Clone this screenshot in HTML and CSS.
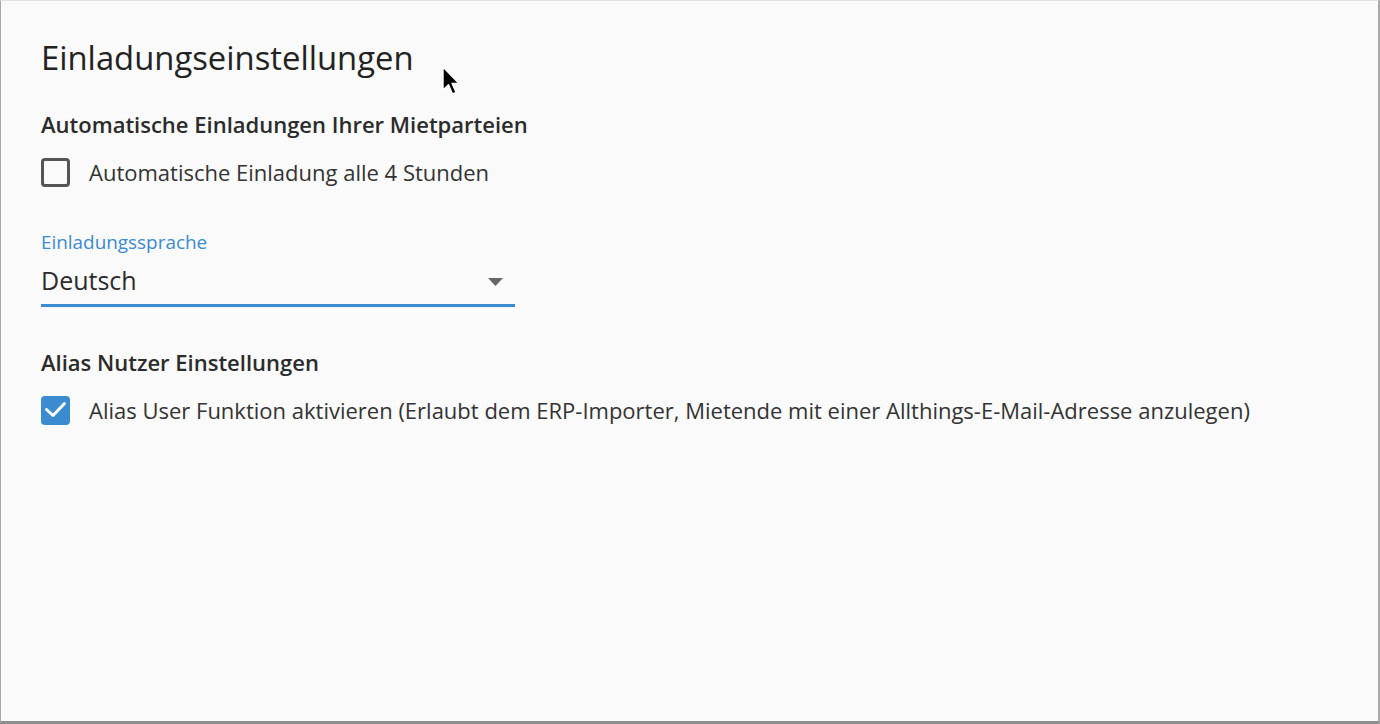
FILE: index.html
```html
<!DOCTYPE html>
<html lang="de">
<head>
<meta charset="utf-8">
<title>Einladungseinstellungen</title>
<link rel="stylesheet" href="styles.css">
</head>
<body>
<div class="frame">
  <main class="panel">
    <h1 class="title">Einladungseinstellungen</h1>
    <section class="group first">
      <h2 class="subtitle">Automatische Einladungen Ihrer Mietparteien</h2>
      <label class="check">
        <span class="box"></span>
        <span class="check-text">Automatische Einladung alle 4 Stunden</span>
      </label>
    </section>
    <div class="field">
      <div class="field-label">Einladungssprache</div>
      <div class="select">
        <span class="select-value">Deutsch</span>
        <svg class="caret" width="15" height="8" viewBox="0 0 15 8"><path d="M0 0h15L7.5 8z" fill="#666"/></svg>
      </div>
    </div>
    <section class="group second">
      <h2 class="subtitle">Alias Nutzer Einstellungen</h2>
      <label class="check">
        <span class="box checked">
          <svg width="29" height="29" viewBox="0 0 29 29"><path d="M5.5 13.5l6.5 6 11.5-12" fill="none" stroke="#fff" stroke-width="3" stroke-linecap="round" stroke-linejoin="round"/></svg>
        </span>
        <span class="check-text">Alias User Funktion aktivieren (Erlaubt dem ERP-Importer, Mietende mit einer Allthings-E-Mail-Adresse anzulegen)</span>
      </label>
    </section>
  </main>
  <svg class="cursor" width="20" height="32" viewBox="0 0 20 32"><path d="M1 1v23l5.5-5.3 4 9.3 3.6-1.6-4-9H17z" fill="#000" stroke="#fff" stroke-width="1.4" stroke-linejoin="round"/></svg>
</div>
</body>
</html>
```

FILE: styles.css
```css
html, body {
  margin: 0;
  padding: 0;
  background: #fafafa;
}
body {
  font-family: "Open Sans", "Noto Sans", sans-serif;
  color: #2b2b2b;
}
.frame {
  position: relative;
  width: 1380px;
  height: 724px;
  box-sizing: border-box;
  background: #fafafa;
  border-top: 1px solid #e2e2e2;
  border-left: 1px solid #a8a8a8;
  border-right: 2px solid #a8a8a8;
  border-bottom: 3px solid #8e8e8e;
}
.panel {
  padding: 35px 40px 0 40px;
}
.title {
  margin: 0;
  font-size: 32.8px;
  font-weight: 400;
  line-height: 44px;
  color: #222;
}
.group.first {
  margin-top: 29px;
}
.group.second {
  margin-top: 40px;
}
.subtitle {
  margin: 0;
  font-size: 22px;
  font-weight: 600;
  line-height: 30px;
  color: #2b2b2b;
}
.check {
  display: flex;
  align-items: center;
  gap: 19px;
  margin-top: 18px;
}
.box {
  width: 29px;
  height: 29px;
  box-sizing: border-box;
  border: 3px solid #555;
  border-radius: 4px;
  display: flex;
  align-items: center;
  justify-content: center;
  flex: none;
}
.box.checked {
  border: none;
  background: #3a8bd0;
}
.check-text {
  font-size: 22px;
  line-height: 30px;
  color: #333;
}
.field {
  margin-top: 44px;
  width: 474px;
}
.field-label {
  font-size: 18.9px;
  line-height: 22px;
  color: #3a8bd0;
}
.select {
  display: flex;
  align-items: center;
  justify-content: space-between;
  padding: 10px 12px 7px 0;
  border-bottom: 3px solid #3a8bd0;
}
.select-value {
  font-size: 25px;
  line-height: 34px;
  color: #2b2b2b;
}
.caret {
  margin-top: 3px;
}
.cursor {
  position: absolute;
  left: 441px;
  top: 65px;
}
```
